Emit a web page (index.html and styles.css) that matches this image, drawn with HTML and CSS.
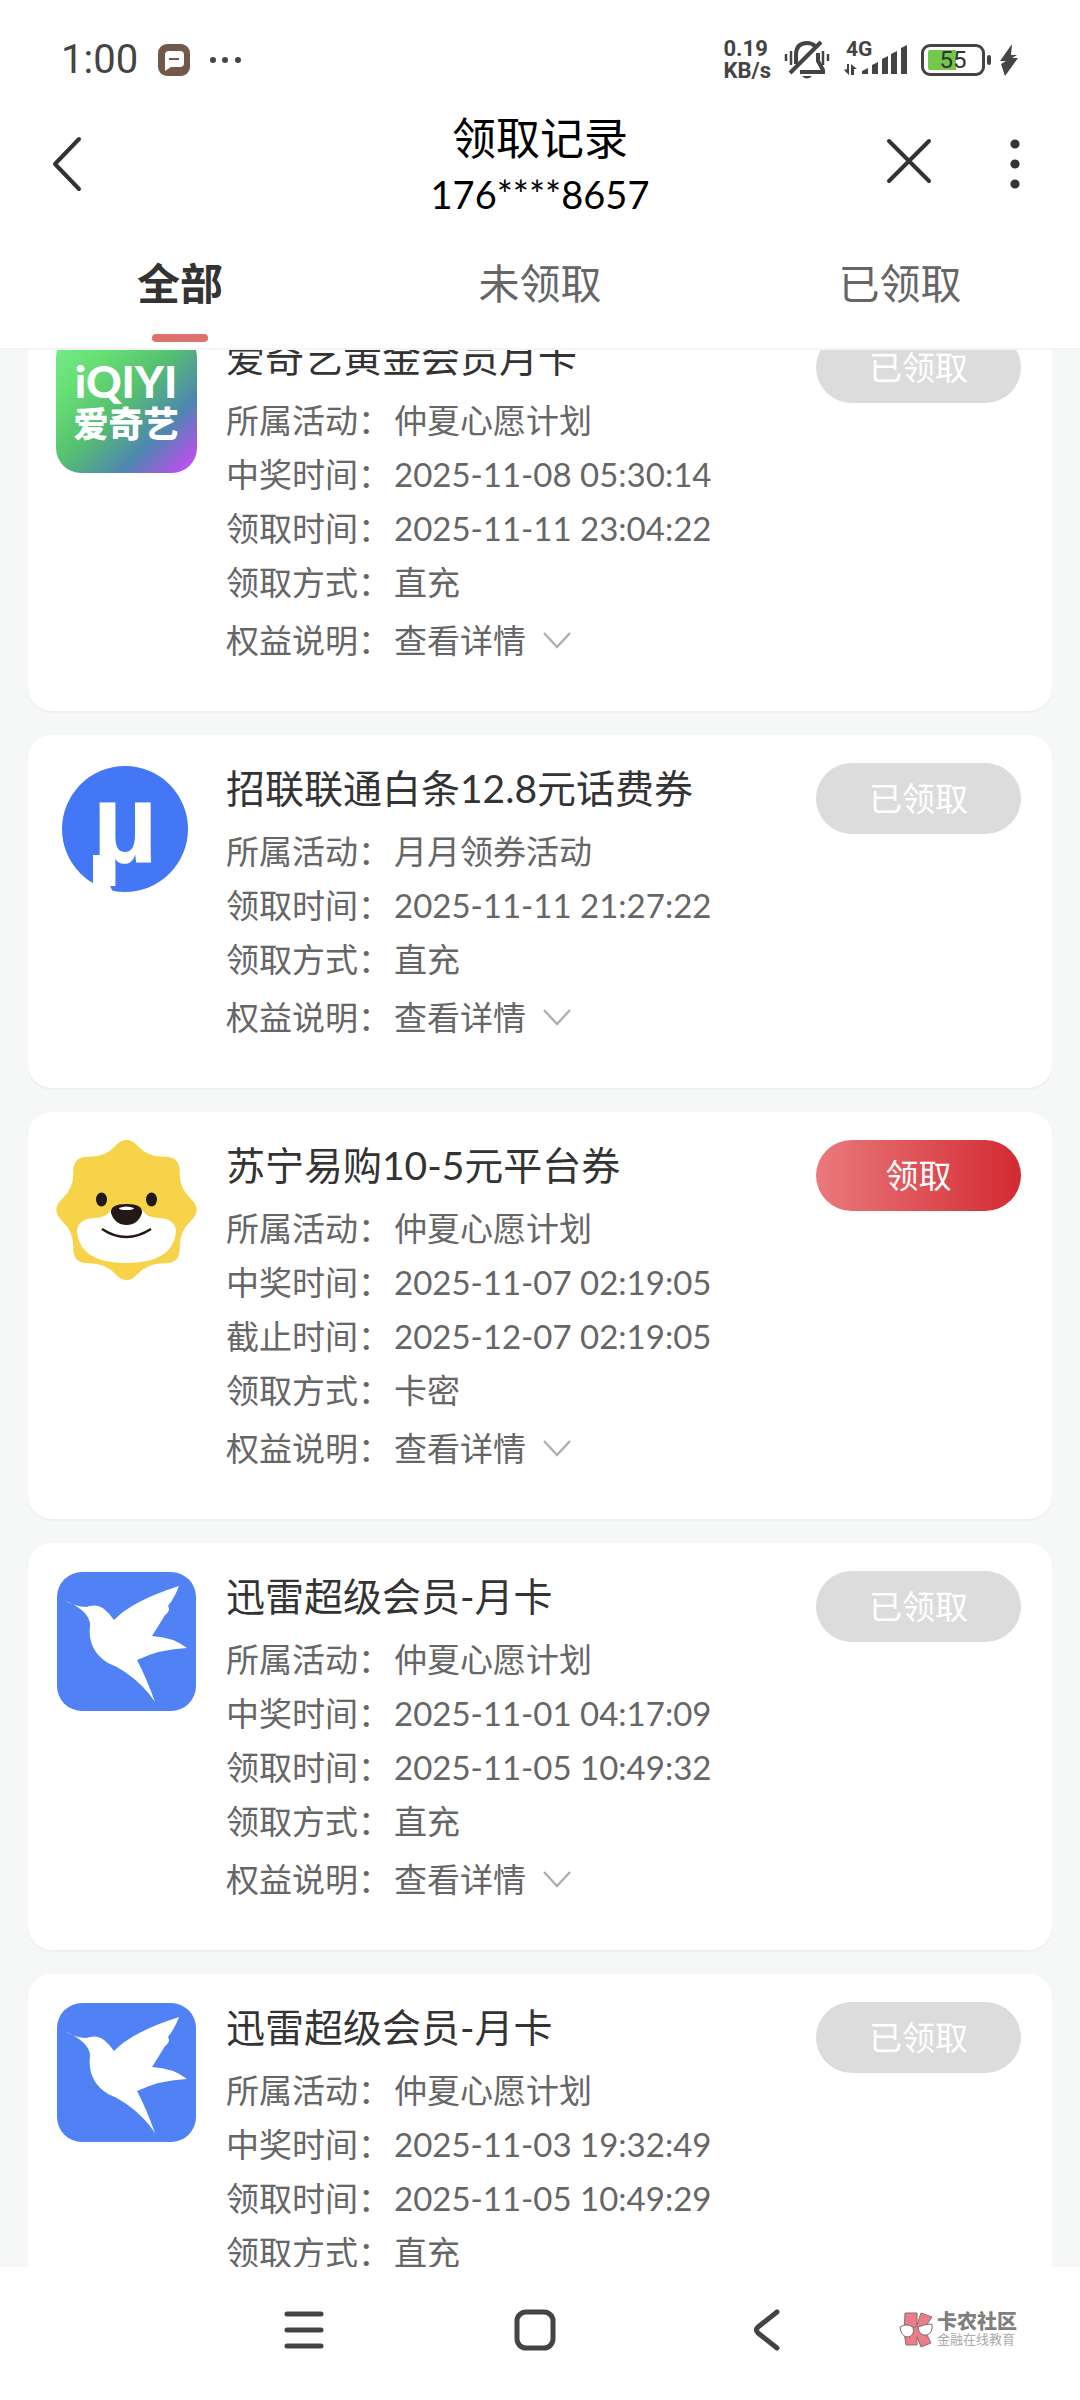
FILE: index.html
```html
<!DOCTYPE html>
<html lang="zh-CN">
<head>
    <meta charset="UTF-8">
    <meta name="viewport" content="width=device-width, initial-scale=1.0">
    <title>领取记录</title>
    <link rel="stylesheet" href="styles.css">
</head>
<body>
    <!-- formas compartidas -->
    <svg class="defs" aria-hidden="true">
        <symbol id="chevron" viewBox="0 0 30 18">
            <path d="M2 2 L15 16 L28 2" fill="none" stroke="#b0b0b0" stroke-width="2.5"/>
        </symbol>
        <symbol id="xunlei" viewBox="0 0 141 141">
            <rect x="1" y="1" width="139" height="139" rx="25" fill="#5082f5"/>
            <path fill="#fff" d="M8 29 Q20 36 30 36 Q41 32 48 38 Q53 42 58 49 Q76 30 123 15 Q119 26 112 35 Q114 38 112 41 Q110 44 109 44 Q103 54 96 65 Q117 66 131 77 Q104 78 81 89 Q90 106 99 131 Q88 114 69 101 Q60 95 52 92 Q31 79 34 54 Q34 40 8 29 Z"/>
        </symbol>
    </svg>

    <div class="page">
        <div class="status">
            <span class="clock">1:00</span>
            <svg class="msg" width="32" height="32" viewBox="0 0 32 32">
                <rect width="32" height="32" rx="9" fill="#73594a"/>
                <path d="M11 7 H22 Q26 7 26 11 V19 Q26 23 22 23 H13 L7 27 V11 Q7 7 11 7 Z" fill="#fff"/>
                <path d="M11 15 H21" stroke="#73594a" stroke-width="2"/>
            </svg>
            <svg class="more" width="32" height="8" viewBox="0 0 32 8" fill="#444">
                <circle cx="4" cy="4" r="3"/><circle cx="16" cy="4" r="3"/><circle cx="29" cy="4" r="3"/>
            </svg>
            <span class="speed">0.19<br>KB/s</span>
            <svg class="bell" width="46" height="40" viewBox="0 0 46 40" fill="none" stroke="#444" stroke-width="3">
                <path d="M2 14 V21 M7 11 V25 M39 11 V25 M44 14 V21" stroke-width="2.5"/>
                <path d="M12 24 V15 Q12 3 23 3 Q28 3 31 6 M34 13 V21 L39 30 V32 H16" stroke-width="4"/>
                <path d="M37 2 L6 33" stroke-width="4"/>
                <path d="M18 36 H28 Q23 41 18 36 Z" fill="#444" stroke="none"/>
            </svg>
            <span class="net">
                <span class="net-type">4G</span>
                <svg width="64" height="32" viewBox="0 0 64 32" fill="#444">
                    <path d="M0 26 L5 31 V20 H3 V25 Z M7 31 V20 L13 25 H10 V31 Z"/>
                    <path d="M18 27 L24 24 V30 H18 Z M28 21 L34 18 V30 H28 Z M38 15 L44 12 V30 H38 Z M47 10 L53 7 V30 H47 Z M57 4 L63 1 V30 H57 Z"/>
                </svg>
            </span>
            <span class="battery">55</span>
            <svg class="bolt" width="18" height="32" viewBox="0 0 18 32" fill="#444">
                <path d="M12 0 L0 17 H6 L1 20 L5 32 L18 14 H12 L17 11 H11 Z"/>
            </svg>
        </div>

        <header class="navbar">
            <button class="icon-btn" aria-label="返回">
                <svg width="30" height="56" viewBox="0 0 30 56" fill="none" stroke="#333" stroke-width="4" stroke-linecap="round" stroke-linejoin="round">
                    <path d="M27 3 L3 28 L27 53"/>
                </svg>
            </button>
            <div class="heading">
                <h1>领取记录</h1>
                <p>176****8657</p>
            </div>
            <div class="actions">
                <button class="icon-btn" aria-label="关闭">
                    <svg width="46" height="52" viewBox="0 0 46 52" stroke="#333" stroke-width="4" stroke-linecap="round">
                        <path d="M3 3 L43 43 M43 3 L3 43"/>
                    </svg>
                </button>
                <button class="icon-btn" aria-label="更多">
                    <svg width="10" height="52" viewBox="0 0 10 52" fill="#333">
                        <circle cx="5" cy="6" r="4.6"/><circle cx="5" cy="26" r="4.6"/><circle cx="5" cy="46" r="4.6"/>
                    </svg>
                </button>
            </div>
        </header>

        <nav class="tabs">
            <button class="tab active">全部</button>
            <button class="tab">未领取</button>
            <button class="tab">已领取</button>
        </nav>

        <main class="list" id="list">
            <article class="card">
                <svg class="logo" viewBox="0 0 141 141">
                    <defs>
                        <linearGradient id="iq" x1="0" y1="0" x2="1" y2="1">
                            <stop offset="0" stop-color="#79ee90"/>
                            <stop offset="0.25" stop-color="#66de74"/>
                            <stop offset="0.48" stop-color="#56c070"/>
                            <stop offset="0.73" stop-color="#4d86b0"/>
                            <stop offset="0.91" stop-color="#ab58e4"/>
                            <stop offset="1" stop-color="#c457f5"/>
                        </linearGradient>
                    </defs>
                    <rect width="141" height="141" rx="25" fill="url(#iq)"/>
                    <text class="iq-en" x="70" y="66">iQIYI</text>
                    <text class="iq-cn" x="70" y="105">爱奇艺</text>
                </svg>
                <div class="info">
                    <h2>爱奇艺黄金会员月卡</h2>
                    <p><span>所属活动：</span>仲夏心愿计划</p>
                    <p><span>中奖时间：</span>2025-11-08 05:30:14</p>
                    <p><span>领取时间：</span>2025-11-11 23:04:22</p>
                    <p><span>领取方式：</span>直充</p>
                    <div class="detail"><span>权益说明：</span><button>查看详情<svg><use href="#chevron"/></svg></button></div>
                </div>
                <button class="claim" disabled>已领取</button>
            </article>

            <article class="card">
                <svg class="logo" viewBox="0 0 141 141">
                    <circle cx="69" cy="66" r="63" fill="#4377f6"/>
                    <path d="M37 92 H48 Q49 116 58 131 L50 136 L37 130 Z" fill="#fff"/>
                    <text class="mu" x="69" y="99">µ</text>
                </svg>
                <div class="info">
                    <h2>招联联通白条12.8元话费券</h2>
                    <p><span>所属活动：</span>月月领券活动</p>
                    <p><span>领取时间：</span>2025-11-11 21:27:22</p>
                    <p><span>领取方式：</span>直充</p>
                    <div class="detail"><span>权益说明：</span><button>查看详情<svg><use href="#chevron"/></svg></button></div>
                </div>
                <button class="claim" disabled>已领取</button>
            </article>

            <article class="card">
                <svg class="logo" viewBox="0 0 141 141">
                    <path fill="#f6d348" d="M59.6 5.7 Q70.5 -6 81.4 5.7 Q92.3 17.3 108.3 16.8 Q124.2 16.3 123.7 32.3 Q123.2 48.2 134.9 59.1 Q146.5 70 134.9 80.9 Q123.2 91.8 123.7 107.7 Q124.2 123.7 108.3 123.2 Q92.3 122.7 81.4 134.3 Q70.5 146 59.6 134.3 Q48.7 122.7 32.7 123.2 Q16.8 123.7 17.3 107.7 Q17.8 91.8 6.1 80.9 Q-5.5 70 6.1 59.1 Q17.8 48.2 17.3 32.3 Q16.8 16.3 32.7 16.8 Q48.7 17.3 59.6 5.7 Z"/>
                    <path fill="#fff" d="M55 70 Q50 78 38 78 Q21 79 21 92 Q24 123 70 123 Q117 123 120 92 Q120 79 103 78 Q91 78 86 70 Z"/>
                    <ellipse cx="45.5" cy="59.5" rx="5.5" ry="7" fill="#231815"/>
                    <ellipse cx="95.5" cy="59.5" rx="5.5" ry="7" fill="#231815"/>
                    <path fill="#231815" d="M70.5 64 Q87 64 86 73 Q82 85 70.5 85 Q59 85 55 73 Q54 64 70.5 64 Z"/>
                    <path fill="#fff" d="M63 68 Q70 65 78 68 Q78 70 70 70 Q63 70 63 68 Z"/>
                    <path d="M46 89 Q70 105 95 89" fill="none" stroke="#231815" stroke-width="2.5"/>
                </svg>
                <div class="info">
                    <h2>苏宁易购10-5元平台券</h2>
                    <p><span>所属活动：</span>仲夏心愿计划</p>
                    <p><span>中奖时间：</span>2025-11-07 02:19:05</p>
                    <p><span>截止时间：</span>2025-12-07 02:19:05</p>
                    <p><span>领取方式：</span>卡密</p>
                    <div class="detail"><span>权益说明：</span><button>查看详情<svg><use href="#chevron"/></svg></button></div>
                </div>
                <button class="claim">领取</button>
            </article>

            <article class="card">
                <svg class="logo"><use href="#xunlei"/></svg>
                <div class="info">
                    <h2>迅雷超级会员-月卡</h2>
                    <p><span>所属活动：</span>仲夏心愿计划</p>
                    <p><span>中奖时间：</span>2025-11-01 04:17:09</p>
                    <p><span>领取时间：</span>2025-11-05 10:49:32</p>
                    <p><span>领取方式：</span>直充</p>
                    <div class="detail"><span>权益说明：</span><button>查看详情<svg><use href="#chevron"/></svg></button></div>
                </div>
                <button class="claim" disabled>已领取</button>
            </article>

            <article class="card">
                <svg class="logo"><use href="#xunlei"/></svg>
                <div class="info">
                    <h2>迅雷超级会员-月卡</h2>
                    <p><span>所属活动：</span>仲夏心愿计划</p>
                    <p><span>中奖时间：</span>2025-11-03 19:32:49</p>
                    <p><span>领取时间：</span>2025-11-05 10:49:29</p>
                    <p><span>领取方式：</span>直充</p>
                    <div class="detail"><span>权益说明：</span><button>查看详情<svg><use href="#chevron"/></svg></button></div>
                </div>
                <button class="claim" disabled>已领取</button>
            </article>
        </main>

        <footer class="bottom">
            <button class="icon-btn" aria-label="菜单">
                <svg width="42" height="42" viewBox="0 0 42 42" stroke="#444" stroke-width="5" stroke-linecap="round">
                    <path d="M4 5 H38 M4 21 H38 M4 37 H38"/>
                </svg>
            </button>
            <button class="icon-btn" aria-label="主页">
                <svg width="42" height="42" viewBox="0 0 42 42" fill="none" stroke="#444" stroke-width="5">
                    <rect x="3" y="3" width="36" height="36" rx="9"/>
                </svg>
            </button>
            <button class="icon-btn" aria-label="返回">
                <svg width="42" height="42" viewBox="0 0 42 42" fill="none" stroke="#444" stroke-width="5" stroke-linecap="round" stroke-linejoin="round">
                    <path d="M31 3 L12 18 Q9 21 12 24 L31 39"/>
                </svg>
            </button>
            <div class="brand">
                <svg width="35" height="36" viewBox="0 0 35 36" stroke="#7d7474" stroke-width="1">
                    <path d="M6 1 H18 V13 L22 1 L33 5 L25 17 L32 31 L22 35 L18 25 V33 H7 L5 20 Z" fill="#ee7c86"/>
                    <path d="M1 15 Q7 11 14 15 Q16 24 9 25 Q2 25 1 15 Z M19 15 Q26 12 33 12 Q34 21 28 23 Q20 24 19 15 Z" fill="#fff"/>
                    <path d="M14 16 Q17 13 19 15" fill="none"/>
                </svg>
                <div>
                    <strong>卡农社区</strong>
                    <small>金融在线教育</small>
                </div>
            </div>
        </footer>
    </div>

    <script>
        // la lista empieza un poco desplazada
        document.getElementById("list").scrollTop = 70;
    </script>
</body>
</html>
```
FILE: styles.css
```css
* {
    box-sizing: border-box;
}
body {
    margin: 0;
    font-family: Lato, "Noto Sans CJK SC", sans-serif;
    color: #333;
    background-color: #fff;
}
h1, h2, p {
    margin: 0;
    font-weight: 400;
}
button {
    font-family: inherit;
    padding: 0;
    border: none;
    background: none;
    cursor: pointer;
}
svg {
    display: block;
    flex: none;
}
.defs {
    position: absolute;
    width: 0;
    height: 0;
}
.page {
    display: flex;
    flex-direction: column;
    height: 100vh;
}

/* barra de estado */
.status {
    display: flex;
    align-items: center;
    height: 106px;
    padding: 14px 62px 0 61px;
    font-family: Roboto, sans-serif;
    color: #444;
}
.clock {
    font-size: 40px;
    line-height: 48px;
}
.msg {
    margin-left: 20px;
}
.more {
    margin-left: 19px;
}
.speed {
    margin-left: auto;
    font-size: 22px;
    font-weight: 700;
    line-height: 22px;
}
.bell {
    margin-left: 13px;
}
.net {
    position: relative;
    margin-left: 14px;
}
.net-type {
    position: absolute;
    top: -5px;
    left: 2px;
    font-size: 21px;
    font-weight: 700;
    line-height: 20px;
}
.battery {
    position: relative;
    width: 64px;
    height: 32px;
    margin: 0 15px 0 13px;
    border: 3px solid #444;
    border-radius: 9px;
    background: linear-gradient(90deg, #72c84a 57%, #fff 57%) content-box;
    padding: 3px 4px;
    font-size: 24px;
    line-height: 20px;
    text-align: center;
    color: #333;
}
.battery::after {
    content: "";
    position: absolute;
    top: 8px;
    right: -9px;
    width: 4px;
    height: 10px;
    border-radius: 2px;
    background-color: #444;
}

/* cabecera */
.navbar {
    display: grid;
    grid-template-columns: 1fr auto 1fr;
    align-items: center;
    padding: 0 60px 0 52px;
}
.heading {
    padding: 3px 0 1px 8px;
    text-align: center;
    color: #000;
}
.heading h1 {
    font-size: 44px;
    line-height: 58px;
}
.heading p {
    font-size: 38px;
    line-height: 54px;
}
.actions {
    display: flex;
    justify-content: flex-end;
    align-items: center;
    gap: 78px;
}

/* pestañas */
.tabs {
    display: grid;
    grid-template-columns: repeat(3, 1fr);
    height: 128px;
    border-bottom: 2px solid #f5f5f5;
}
.tab {
    position: relative;
    padding-bottom: 8px;
    font-size: 41px;
    color: #666;
}
.tab.active {
    font-size: 43px;
    font-weight: 700;
    color: #333;
}
.tab.active::after {
    content: "";
    position: absolute;
    bottom: 6px;
    left: 50%;
    width: 56px;
    height: 8px;
    margin-left: -28px;
    border-radius: 4px;
    background-color: #dd716e;
}

/* lista */
.list {
    flex: 1;
    min-height: 0;
    overflow-y: auto;
    scrollbar-width: none;
    padding: 24px 28px;
    background-color: #f6f8f8;
}
.card {
    display: flex;
    align-items: flex-start;
    margin-bottom: 24px;
    padding: 28px 31px 40px 28px;
    border-radius: 24px;
    background-color: #fff;
    box-shadow: 0 2px 2px rgba(0, 0, 0, 0.04);
}
.logo {
    width: 141px;
    height: 141px;
    margin-right: 29px;
}
.iq-en, .iq-cn, .mu {
    fill: #fff;
    text-anchor: middle;
    font-weight: 900;
}
.iq-en {
    font-size: 44px;
}
.iq-cn {
    font-size: 35px;
}
.mu {
    font-family: "Liberation Sans", sans-serif;
    font-size: 114px;
}
.info {
    flex: 1;
    font-size: 33px;
    line-height: 54px;
    color: #666;
}
.info h2 {
    margin-bottom: 11px;
    font-size: 39px;
    line-height: 50px;
    color: #333;
}
.info span {
    margin-right: 3px;
}
.detail {
    display: flex;
    line-height: 62px;
}
.detail button {
    display: flex;
    align-items: center;
    gap: 16px;
    font-size: 33px;
    line-height: 62px;
    color: #666;
}
.detail svg {
    width: 30px;
    height: 18px;
}
.claim {
    width: 205px;
    height: 71px;
    padding-bottom: 4px;
    border-radius: 36px;
    background: linear-gradient(90deg, #ea7a7c, #d32a32);
    font-size: 33px;
    color: #fff;
}
.claim:disabled {
    background: #dcdcdc;
    cursor: default;
}

/* barra inferior */
.bottom {
    display: grid;
    grid-template-columns: repeat(3, 1fr) auto;
    align-items: center;
    height: 133px;
    padding: 0 63px 8px 188px;
}
.icon-btn svg {
    margin: 0 auto;
}
.navbar .icon-btn svg {
    margin: 0;
}
.brand {
    display: flex;
    align-items: center;
    gap: 3px;
    padding-left: 16px;
}
.brand strong, .brand small {
    display: block;
    line-height: 18px;
}
.brand strong {
    font-size: 20px;
    font-weight: 900;
    color: #808080;
}
.brand small {
    font-size: 13px;
    color: #aaa;
}
```
